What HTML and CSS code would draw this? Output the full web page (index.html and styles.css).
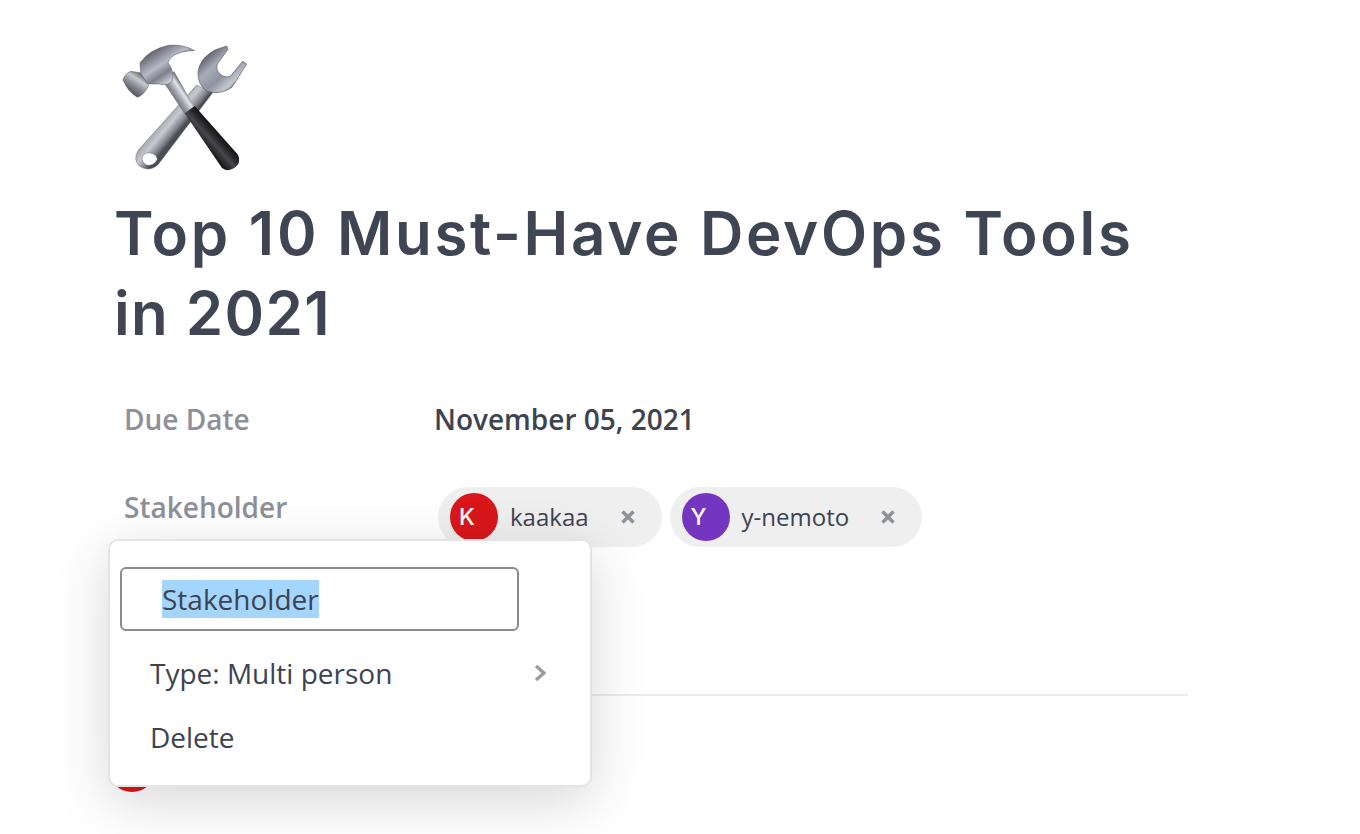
FILE: index.html
```html
<!DOCTYPE html>
<html lang="en">

<head>
    <meta charset="UTF-8">
    <title>Top 10 Must-Have DevOps Tools in 2021</title>
    <link rel="stylesheet" href="styles.css">
</head>

<body>
    <div class="page">
        <svg class="emoji" viewBox="48 30 408 408" xmlns="http://www.w3.org/2000/svg">
            <defs>
                <linearGradient id="wrenchHandle" gradientUnits="userSpaceOnUse" x1="185" y1="245" x2="245" y2="295">
                    <stop offset="0" stop-color="#5b5d65"/>
                    <stop offset="0.25" stop-color="#a4a6ae"/>
                    <stop offset="0.55" stop-color="#c9cad0"/>
                    <stop offset="0.85" stop-color="#7f8189"/>
                    <stop offset="1" stop-color="#4a4c53"/>
                </linearGradient>
                <linearGradient id="wrenchHead" gradientUnits="userSpaceOnUse" x1="300" y1="90" x2="390" y2="190">
                    <stop offset="0" stop-color="#5d5f69"/>
                    <stop offset="0.3" stop-color="#a9acb8"/>
                    <stop offset="0.6" stop-color="#8f92a0"/>
                    <stop offset="0.85" stop-color="#c6c8d0"/>
                    <stop offset="1" stop-color="#6a6c74"/>
                </linearGradient>
                <linearGradient id="hammerHead" gradientUnits="userSpaceOnUse" x1="135" y1="60" x2="205" y2="165">
                    <stop offset="0" stop-color="#44464e"/>
                    <stop offset="0.2" stop-color="#747782"/>
                    <stop offset="0.5" stop-color="#b7bac6"/>
                    <stop offset="0.72" stop-color="#7d808b"/>
                    <stop offset="1" stop-color="#dcdde3"/>
                </linearGradient>
                <linearGradient id="poll" gradientUnits="userSpaceOnUse" x1="85" y1="190" x2="125" y2="130">
                    <stop offset="0" stop-color="#4b4d54"/>
                    <stop offset="0.35" stop-color="#7e808a"/>
                    <stop offset="0.7" stop-color="#c6c8cf"/>
                    <stop offset="1" stop-color="#5f6169"/>
                </linearGradient>
                <linearGradient id="shaft" gradientUnits="userSpaceOnUse" x1="210" y1="205" x2="255" y2="175">
                    <stop offset="0" stop-color="#53555c"/>
                    <stop offset="0.45" stop-color="#9fa1a9"/>
                    <stop offset="0.75" stop-color="#e4e5e9"/>
                    <stop offset="1" stop-color="#62646c"/>
                </linearGradient>
                <linearGradient id="grip" gradientUnits="userSpaceOnUse" x1="310" y1="345" x2="355" y2="305">
                    <stop offset="0" stop-color="#161618"/>
                    <stop offset="0.45" stop-color="#47474c"/>
                    <stop offset="0.7" stop-color="#2a2a2d"/>
                    <stop offset="1" stop-color="#111113"/>
                </linearGradient>
            </defs>
            <!-- wrench -->
            <path fill="url(#wrenchHandle)" stroke="#6a6c73" stroke-width="1.5" fill-rule="evenodd" d="M290 165 L115 360 Q98 388 118 408 Q146 428 174 404 L338 188 Z M126 386 Q128 368 148 368 Q170 372 172 388 Q164 406 144 406 Q128 402 126 386 Z"/>
            <path fill="url(#wrenchHead)" stroke="#55575e" stroke-width="2" stroke-linejoin="round" d="M380 48 L345 60 Q300 84 294 125 Q292 165 322 184 Q360 196 396 172 L440 102 L428 94 L392 138 Q376 146 360 132 Q346 118 352 102 L384 58 Z"/>
            <!-- hammer shaft -->
            <path fill="url(#shaft)" d="M186 150 L222 124 L284 232 L254 252 Z"/>
            <!-- grip -->
            <path fill="url(#grip)" d="M254 250 L284 228 L414 374 Q424 396 406 412 Q386 428 366 414 Z"/>
            <!-- hammer head -->
            <path fill="url(#hammerHead)" stroke="#55575f" stroke-width="1.5" stroke-linejoin="round" d="M120 98 Q150 58 205 46 Q250 42 284 62 Q245 62 222 76 Q208 86 204 98 Q222 120 218 152 Q200 170 178 162 L146 162 Q130 150 122 128 Z"/>
            <path fill="url(#poll)" stroke="#55575f" stroke-width="1.5" stroke-linejoin="round" d="M120 128 L92 124 Q74 132 69 150 Q84 186 112 202 Q132 196 146 166 Z"/>
        </svg>

        <h1 class="title"><span class="title-line-one">Top 10 Must-Have DevOps Tools</span><br><span class="title-line-two">in 2021</span></h1>

        <div class="props">
            <div class="prop prop-date">
                <div class="prop-label">Due Date</div>
                <div class="prop-value">November 05, 2021</div>
            </div>
            <div class="prop prop-people">
                <div class="prop-label prop-label-people">Stakeholder</div>
                <div class="chips">
                    <div class="chip">
                        <span class="avatar avatar-red">K</span>
                        <span class="chip-name">kaakaa</span>
                        <svg class="chip-x" viewBox="0 0 14 14"><path d="M1.5 1.5 L12.5 12.5 M12.5 1.5 L1.5 12.5"/></svg>
                    </div>
                    <div class="chip">
                        <span class="avatar avatar-purple">Y</span>
                        <span class="chip-name">y-nemoto</span>
                        <svg class="chip-x" viewBox="0 0 14 14"><path d="M1.5 1.5 L12.5 12.5 M12.5 1.5 L1.5 12.5"/></svg>
                    </div>
                </div>
            </div>
        </div>

        <hr class="divider">

        <div class="comment-row">
            <span class="avatar avatar-red avatar-comment"></span>
        </div>

        <div class="menu">
            <div class="menu-input"><span class="menu-selected">Stakeholder</span></div>
            <div class="menu-item">
                <span>Type: Multi person</span>
                <svg class="menu-arrow" viewBox="0 0 12 18"><path d="M2 2 L10 9 L2 16"/></svg>
            </div>
            <div class="menu-item">Delete</div>
        </div>
    </div>
</body>

</html>
```

FILE: styles.css
```css
html, body {
    margin: 0;
    padding: 0;
    background: #fff;
}

body {
    width: 1360px;
    height: 834px;
    overflow: hidden;
    font-family: "Open Sans", "Liberation Sans", sans-serif;
    color: #3d4351;
}

.page {
    position: relative;
    height: 834px;
    padding: 40px 172px 0 116px;
    box-sizing: border-box;
}

.emoji {
    display: block;
    width: 136px;
    height: 136px;
}

.title {
    margin: 17px 0 0 -2px;
    font-family: Inter, "Liberation Sans", sans-serif;
    font-size: 60px;
    font-weight: 600;
    line-height: 80px;
    white-space: nowrap;
    color: #3f4552;
}

.title-line-one {
    letter-spacing: 2.7px;
}

.title-line-two {
    letter-spacing: 1.4px;
}

.props {
    margin-top: 36px;
}

.prop {
    display: flex;
    padding-left: 8px;
}

.prop-date {
    height: 60px;
    align-items: center;
}

.prop-people {
    margin-top: 38px;
}

.prop-label {
    width: 311px;
    font-size: 28px;
    font-weight: 600;
    color: #8e9099;
}

.prop-label-people {
    line-height: 40px;
}

.prop-value {
    margin-left: -1px;
    font-size: 28px;
    font-weight: 600;
    color: #3d4351;
}

.chips {
    display: flex;
    gap: 8px;
    margin-left: 3px;
}

.chip {
    display: flex;
    align-items: center;
    height: 60px;
    padding: 0 27px 0 12px;
    border-radius: 30px;
    background: #efefef;
    font-size: 24px;
}

.avatar {
    display: flex;
    align-items: center;
    justify-content: center;
    width: 48px;
    height: 48px;
    box-sizing: border-box;
    padding-right: 14px;
    border-radius: 50%;
    color: #fff;
    font-family: Inter, "Liberation Sans", sans-serif;
    font-size: 23px;
    font-weight: 500;
}

.avatar-red {
    background: #d9171b;
}

.avatar-purple {
    background: #7436c1;
}

.chip-name {
    margin-left: 12px;
    padding-bottom: 2px;
}

.chip-x {
    width: 14px;
    height: 14px;
    margin-left: 32px;
    fill: none;
    stroke: #90929a;
    stroke-width: 3.5;
}

.divider {
    margin: 147px 0 0 0;
    border: 0;
    border-top: 2px solid #ececec;
}

.comment-row {
    margin-top: 48px;
}

.avatar-comment {
    margin-left: -8px;
    padding: 0;
}

.menu {
    position: absolute;
    left: 108px;
    top: 539px;
    width: 484px;
    height: 248px;
    box-sizing: border-box;
    padding: 26px 10px 0 10px;
    background: #fff;
    border: 2px solid #e4e4e4;
    border-radius: 10px;
    box-shadow: 0 14px 56px rgba(0, 0, 0, 0.16);
}

.menu-input {
    display: flex;
    align-items: center;
    width: 399px;
    height: 64px;
    box-sizing: border-box;
    padding-left: 40px;
    border: 2px solid #8c8c8c;
    border-radius: 6px;
    font-size: 28px;
}

.menu-selected {
    background: #a4d5fd;
    line-height: 38px;
}

.menu-item {
    display: flex;
    align-items: center;
    justify-content: space-between;
    height: 64px;
    padding: 0 34px 0 30px;
    font-size: 28px;
}

.menu-input + .menu-item {
    margin-top: 10px;
}

.menu-arrow {
    width: 12px;
    height: 18px;
    fill: none;
    stroke: #9a9ca4;
    stroke-width: 3.5;
}
```
